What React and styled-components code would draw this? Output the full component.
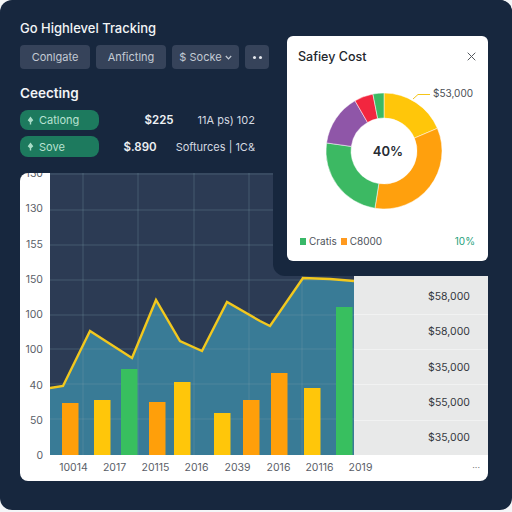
import React from "react";
import styled, { createGlobalStyle } from "styled-components";

const Global = createGlobalStyle`
  html, body { margin: 0; padding: 0; width: 512px; height: 512px; overflow: hidden; background: #f4f6f8; }
  body { font-family: Inter, "Liberation Sans", sans-serif; }
`;

const Panel = styled.div`
  position: relative;
  box-sizing: border-box;
  width: 512px;
  height: 510px;
  padding: 19px 24px 0 20px;
  background: #17273e;
  border-radius: 12px;
  overflow: hidden;
`;
const Title = styled.h1`
  margin: 0;
  font-size: 13px;
  line-height: 18px;
  font-weight: 500;
  color: #f2f4f6;
`;
const Toolbar = styled.div`
  display: flex;
  gap: 6px;
  margin-top: 8px;
`;
const ToolButton = styled.div`
  box-sizing: border-box;
  width: ${(p) => p.$w}px;
  height: 24px;
  display: flex;
  align-items: center;
  justify-content: center;
  gap: 3px;
  border-radius: 4px;
  background: #36435a;
  color: #c3cad4;
  font-size: 11px;
`;
const Dot = styled.span`
  width: 3px;
  height: 3px;
  border-radius: 50%;
  background: #e6e9ee;
`;
const Section = styled.h2`
  margin: 15px 0 8px;
  font-size: 13.5px;
  line-height: 18px;
  font-weight: 600;
  color: #f2f4f6;
`;
const Rows = styled.div`
  display: flex;
  flex-direction: column;
  gap: 6px;
  width: 235px;
`;
const Row = styled.div`
  display: flex;
  align-items: center;
  gap: ${(p) => p.$gap}px;
`;
const Pill = styled.div`
  box-sizing: border-box;
  width: 79px;
  height: ${(p) => p.$h}px;
  margin-right: auto;
  padding-left: 7px;
  display: flex;
  align-items: center;
  gap: 5px;
  border-radius: 8px;
  background: #1d7a5e;
  color: #b9e2d2;
  font-size: 11px;
`;
const Amount = styled.span`
  font-size: 11.5px;
  font-weight: 600;
  color: #eef1f4;
`;
const Note = styled.span`
  font-size: 11px;
  color: #d5dae1;
  white-space: nowrap;
`;
const Chart = styled.div`
  display: grid;
  grid-template-columns: 30px 304px 134px;
  grid-template-rows: 282px 26px;
  width: 468px;
  margin-top: 16px;
  background: #fff;
  border-radius: 8px;
  overflow: hidden;
`;
const YAxis = styled.div`
  display: flex;
  flex-direction: column;
  justify-content: space-between;
  align-items: flex-end;
  margin: -5px 7px -7px 0;
  font-size: 10.5px;
  line-height: 12px;
  color: #5a6068;
`;
const Plot = styled.svg`
  display: block;
  width: 304px;
  height: 282px;
`;
const Values = styled.div`
  display: flex;
  flex-direction: column;
  justify-content: flex-end;
  background: #e8e9e9;
`;
const ValueRow = styled.div`
  box-sizing: border-box;
  height: 35.3px;
  padding-right: 18px;
  display: flex;
  align-items: center;
  justify-content: flex-end;
  border-top: 1px solid #f1f2f2;
  font-size: 10.5px;
  color: #34383e;
  &:first-child { border-top: none; }
`;
const XAxis = styled.div`
  grid-column: 1 / -1;
  display: flex;
  align-items: center;
  padding: 0 8px 2px 33px;
  font-size: 10.5px;
  color: #5a6068;
`;
const XLabel = styled.span`
  width: 41px;
  text-align: center;
`;
const More = styled.span`
  margin-left: auto;
  font-size: 9px;
  color: #777;
`;
const Overlay = styled.div`
  position: absolute;
  top: 0;
  right: 0;
  box-sizing: border-box;
  width: 239px;
  height: 276px;
  padding: 36px 24px 15px 14px;
  background: #17273e;
  border-bottom-left-radius: 12px;
`;
const Card = styled.div`
  height: 225px;
  display: flex;
  flex-direction: column;
  background: #fff;
  border-radius: 6px;
`;
const CardHead = styled.div`
  display: flex;
  align-items: center;
  justify-content: space-between;
  padding: 10px 12px 0 11px;
  height: 20px;
`;
const CardTitle = styled.span`
  font-size: 12.5px;
  font-weight: 500;
  color: #23272d;
`;
const DonutWrap = styled.div`
  position: relative;
  height: 116px;
  margin: 27px 0 0 39px;
`;
const Donut = styled.svg`
  display: block;
  overflow: visible;
`;
const Center = styled.span`
  position: absolute;
  left: 58px;
  top: 58px;
  transform: translate(-50%, -50%);
  margin-left: 4px;
  font-size: 13px;
  font-weight: 600;
  color: #262b33;
`;
const Callout = styled.span`
  position: absolute;
  left: 107px;
  top: -6px;
  font-size: 10px;
  line-height: 13px;
  color: #4a4e54;
`;
const Legend = styled.div`
  display: flex;
  align-items: center;
  margin-top: 26px;
  padding: 0 13px;
  font-size: 10px;
  color: #4d5259;
`;
const Swatch = styled.i`
  width: 6px;
  height: 7px;
  margin-right: 3px;
  background: ${(p) => p.$c};
`;
const LegendText = styled.span`
  margin-right: 4px;
`;
const Percent = styled.span`
  margin-left: auto;
  color: #1f9f7c;
`;

const pt = (cx, cy, r, a) => {
  const t = ((a - 90) * Math.PI) / 180;
  return `${(cx + r * Math.cos(t)).toFixed(2)} ${(cy + r * Math.sin(t)).toFixed(2)}`;
};
const arc = (from, to) => {
  const large = to - from > 180 ? 1 : 0;
  return `M${pt(58, 58, 58, from)}A58 58 0 ${large} 1 ${pt(58, 58, 58, to)}L${pt(58, 58, 33, to)}A33 33 0 ${large} 0 ${pt(58, 58, 33, from)}Z`;
};
const segments = [
  [0, 67, "#ffc60a"],
  [67, 189, "#ffa00d"],
  [189, 278, "#3cb963"],
  [278, 330, "#8f56a8"],
  [330, 349, "#f2263f"],
  [349, 360, "#3cb963"],
];
const linePts = [[0,215],[13,213],[40,158],[82,185],[106,127],[130,168],[152,178],[177,129],[210,148],[220,153],[253,105],[280,106],[304,108]];
const bars = [
  [12, 230, "#ff9f0a"],
  [44, 227, "#ffc60a"],
  [71, 196, "#38bf5f"],
  [99, 229, "#ff9f0a"],
  [124, 209, "#ffc60a"],
  [164, 240, "#ffc60a"],
  [193, 227, "#ff9f0a"],
  [221, 200, "#ff9f0a"],
  [254, 215, "#ffc60a"],
  [286, 134, "#38bf5f"],
];
const hLines = [1, 37, 72, 107, 142, 176, 211, 246];
const vLines = [33, 88, 144, 199, 252];
const yLabels = ["130", "130", "155", "150", "100", "100", "40", "50", "0"];
const xLabels = ["10014", "2017", "20115", "2016", "2039", "2016", "20116", "2019"];
const values = ["$58,000", "$58,000", "$35,000", "$55,000", "$35,000"];
const linePoints = linePts.map((p) => p.join(",")).join(" ");

const Leaf = () => (
  <svg width="7" height="9" viewBox="0 0 7 9">
    <path d="M3.5 0.5 6.3 4.2 4.2 6.2V8.5H2.8V6.2L.7 4.2Z" fill="#a9dcc8" />
  </svg>
);

export default function App() {
  return (
    <>
      <Global />
      <Panel>
        <Title>Go Highlevel Tracking</Title>
        <Toolbar>
          <ToolButton $w={70}>Conlgate</ToolButton>
          <ToolButton $w={70}>Anfictlng</ToolButton>
          <ToolButton $w={67}>
            $ Socke
            <svg width="7" height="5" viewBox="0 0 7 5"><path d="M.8 1 3.5 3.8 6.2 1" fill="none" stroke="#c3cad4" strokeWidth="1.2" /></svg>
          </ToolButton>
          <ToolButton $w={24}><Dot /><Dot /></ToolButton>
        </Toolbar>
        <Section>Ceecting</Section>
        <Rows>
          <Row $gap={24}>
            <Pill $h={20}><Leaf />Catlong</Pill>
            <Amount>$225</Amount>
            <Note>11A ps) 102</Note>
          </Row>
          <Row $gap={19}>
            <Pill $h={21}><Leaf />Sove</Pill>
            <Amount>$.890</Amount>
            <Note>Softurces | 1C&amp;</Note>
          </Row>
        </Rows>
        <Chart>
          <YAxis>{yLabels.map((l, i) => <span key={i}>{l}</span>)}</YAxis>
          <Plot viewBox="0 0 304 282">
            <rect width="304" height="282" fill="#2c3b54" />
            <polygon points={`0,282 ${linePoints} 304,282`} fill="#397b96" />
            {hLines.map((y) => <line key={y} x1="0" x2="304" y1={y} y2={y} stroke="#7f9fb0" strokeOpacity="0.3" />)}
            {vLines.map((x) => <line key={x} x1={x} x2={x} y1="0" y2="282" stroke="#7f9fb0" strokeOpacity="0.3" />)}
            {bars.map(([x, y, c]) => <rect key={x} x={x} y={y} width="16.5" height={282 - y} fill={c} />)}
            <polyline points={linePoints} fill="none" stroke="#f2c81e" strokeWidth="2.4" />
          </Plot>
          <Values>{values.map((v, i) => <ValueRow key={i}>{v}</ValueRow>)}</Values>
          <XAxis>
            {xLabels.map((l, i) => <XLabel key={i}>{l}</XLabel>)}
            <More>···</More>
          </XAxis>
        </Chart>
        <Overlay>
          <Card>
            <CardHead>
              <CardTitle>Safiey Cost</CardTitle>
              <svg width="9" height="9" viewBox="0 0 9 9"><path d="M.7.7 8.3 8.3M8.3.7.7 8.3" stroke="#55595f" strokeWidth="1" /></svg>
            </CardHead>
            <DonutWrap>
              <Donut width="116" height="116" viewBox="0 0 116 116">
                {segments.map(([a, b, c]) => <path key={a} d={arc(a, b)} fill={c} stroke="#fff" strokeWidth="0.5" />)}
                <path d="M87 6 92 1.5H104" fill="none" stroke="#f5c518" strokeWidth="1" />
              </Donut>
              <Center>40%</Center>
              <Callout>$53,000</Callout>
            </DonutWrap>
            <Legend>
              <Swatch $c="#38b868" />
              <LegendText>Cratis</LegendText>
              <Swatch $c="#ff9a1f" />
              <LegendText>C8000</LegendText>
              <Percent>10%</Percent>
            </Legend>
          </Card>
        </Overlay>
      </Panel>
    </>
  );
}
